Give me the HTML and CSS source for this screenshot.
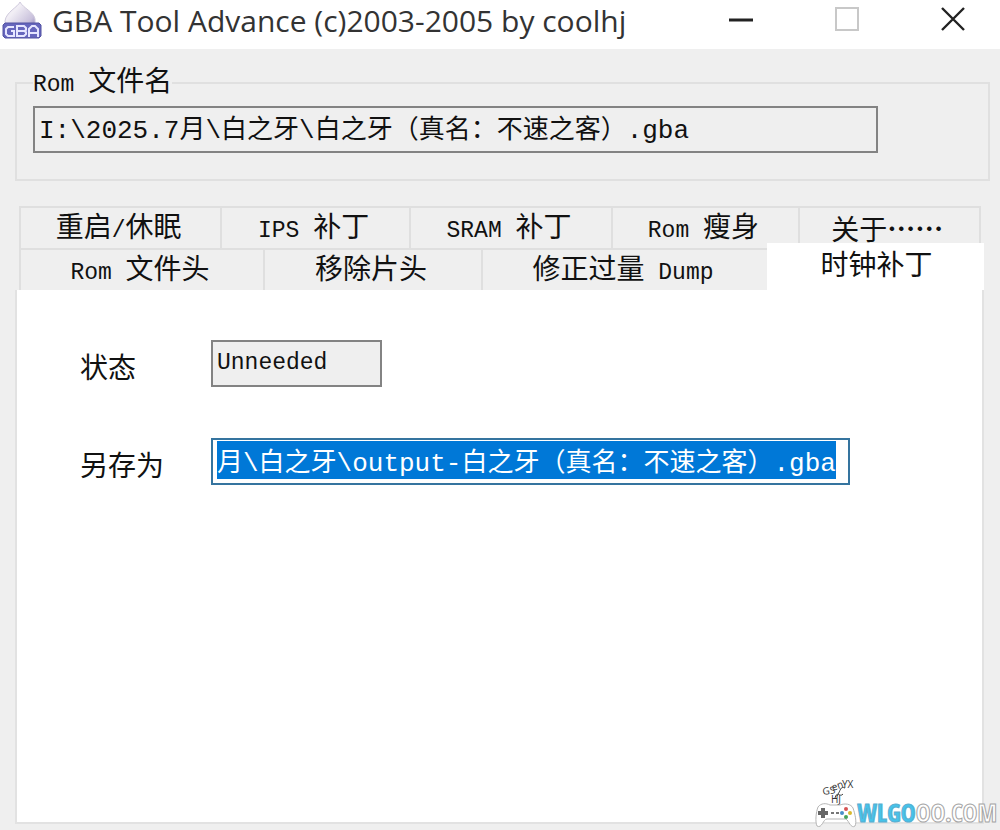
FILE: index.html
```html
<!DOCTYPE html>
<html lang="zh-CN">
<head>
    <meta charset="UTF-8">
    <title>GBA Tool Advance</title>
    <link rel="stylesheet" href="styles.css">
</head>
<body>
    <header class="titlebar">
        <svg class="app-icon" viewBox="0 0 40 38" aria-hidden="true">
            <defs>
                <linearGradient id="drop" x1="0" y1="0" x2="1" y2="1">
                    <stop offset="0.3" stop-color="#f1eef5"/>
                    <stop offset="0.7" stop-color="#c9c1dc"/>
                    <stop offset="1" stop-color="#6f63a8"/>
                </linearGradient>
            </defs>
            <path d="M18 0C16 5 4 10 3 19c0 9 7 13 16 13 10 0 15-6 14-15C32 10 21 6 18 0z" fill="url(#drop)" stroke="#d0cadd"/>
            <path d="M3 21h34l2 2v11l-2 2H3l-2-2V23z" fill="#6666bd" stroke="#5353a2"/>
            <path d="M12 25H6l-2 2v5l2 2h6v-5H9M15 24v10h7l2-2v-2l-2-1 2-1v-2l-2-2zm0 5h7M27 35v-8l3-3h3l3 3v8M27 31h9" fill="none" stroke="#e6e6ff" stroke-width="2"/>
        </svg>
        <h1 class="title">GBA Tool Advance (c)2003-2005 by coolhj</h1>
        <div class="window-buttons">
            <button type="button" class="window-button" aria-label="最小化">
                <svg viewBox="0 0 24 24"><path d="M0 13h24" stroke="#222" stroke-width="3"/></svg>
            </button>
            <button type="button" class="window-button" aria-label="最大化" disabled>
                <svg viewBox="0 0 24 24"><path d="M1 1h22v22H1z" fill="none" stroke="#c8c8c8" stroke-width="2"/></svg>
            </button>
            <button type="button" class="window-button" aria-label="关闭">
                <svg viewBox="0 0 24 24"><path d="M1 1l22 22M23 1L1 23" stroke="#222" stroke-width="2.4"/></svg>
            </button>
        </div>
    </header>

    <main class="content">
        <!-- Rom 文件名 -->
        <fieldset class="group">
            <legend><label for="romName"><span class="latin">Rom </span>文件名</label></legend>
            <input type="text" id="romName" class="field rom-name" value="I:\2025.7月\白之牙\白之牙（真名：不速之客）.gba" readonly>
        </fieldset>

        <!-- 选项卡 -->
        <div class="tabs" role="tablist">
            <div class="tab-row tab-row-back">
                <button type="button" class="tab" role="tab">重启<span class="latin">/</span>休眠</button>
                <button type="button" class="tab" role="tab"><span class="latin">IPS </span>补丁</button>
                <button type="button" class="tab" role="tab"><span class="latin">SRAM </span>补丁</button>
                <button type="button" class="tab" role="tab"><span class="latin">Rom </span>瘦身</button>
                <button type="button" class="tab" role="tab">关于<span class="dots">……</span></button>
            </div>
            <div class="tab-row tab-row-front">
                <button type="button" class="tab" role="tab"><span class="latin">Rom </span>文件头</button>
                <button type="button" class="tab" role="tab">移除片头</button>
                <button type="button" class="tab" role="tab">修正过量<span class="latin"> Dump</span></button>
                <button type="button" class="tab active" role="tab" aria-selected="true">时钟补丁</button>
            </div>
        </div>

        <section class="panel" role="tabpanel">
            <label for="status">状态</label>
            <input type="text" id="status" class="field status" value="Unneeded" readonly>
            <label for="saveAs">另存为</label>
            <input type="text" id="saveAs" class="field save-as" value="月\白之牙\output-白之牙（真名：不速之客）.gba">
        </section>
    </main>

    <div class="watermark">
        <svg class="gamepad" viewBox="0 0 42 50" aria-hidden="true">
            <g class="scribble">
                <text x="8" y="17" transform="rotate(-8 8 17)">GS</text>
                <text x="18" y="13" transform="rotate(-20 18 13)">en</text>
                <text x="27" y="10">YX</text>
                <text x="16" y="25">HJ</text>
                <path d="M20 20c2-8 5 0 8-4M22 18c4-6 3-10 8-8" fill="none" stroke="#444"/>
            </g>
            <path d="M3 29c3-4 8-4 12-2h10c5-2 11-1 13 3 2 6 4 14 2 18-4 3-6-5-9-7H12c-4 0-5 10-10 7C0 44 1 34 3 29z" fill="#fff" stroke="#b5b5b5"/>
            <path d="M8 30v10M3 35h10" stroke="#666" stroke-width="4"/>
            <path d="M16 35h3M21 35h3" stroke="#777" stroke-width="2"/>
            <circle cx="31" cy="31" r="2" fill="#d65454"/>
            <circle cx="27" cy="35" r="2" fill="#4a8fc9"/>
            <circle cx="35" cy="35" r="2" fill="#d9b92e"/>
            <circle cx="31" cy="39" r="2" fill="#46a35a"/>
        </svg>
        <span class="site"><span class="site-blue">WLGO</span>OO.COM</span>
    </div>

    <script>
        // 默认选中保存路径
        const saveAs = document.getElementById('saveAs');
        saveAs.focus();
        saveAs.select();
    </script>
</body>
</html>
```
FILE: styles.css
```css
* {
    box-sizing: border-box;
}
body {
    margin: 0;
    min-height: 100vh;
    display: flex;
    flex-direction: column;
    position: relative;
    background: #efefef;
    color: #111;
    font-family: "Liberation Mono", "Noto Sans CJK SC", monospace;
    font-size: 28px;
    line-height: 32px;
}
.titlebar {
    display: flex;
    align-items: center;
    height: 49px;
    padding: 0 35px 8px 2px;
    background: #fff;
}
.app-icon {
    width: 40px;
    height: 38px;
    margin-right: 10px;
}
.title {
    flex: 1;
    margin: 0;
    color: #333;
    font-family: "Open Sans", "Noto Sans", sans-serif;
    font-size: 30px;
    font-weight: normal;
    white-space: nowrap;
}
.window-buttons {
    display: flex;
    gap: 82px;
    padding-bottom: 3px;
}
.window-button {
    width: 24px;
    height: 24px;
    padding: 0;
    border: none;
    background: none;
}
.window-button svg {
    display: block;
}
.content {
    flex: 1;
    display: flex;
    flex-direction: column;
    padding: 15px 16px 6px 15px;
}
.group {
    margin: 0 -6px 0 0;
    padding: 5px 110px 26px 16px;
    border: 2px solid #e0e0e0;
}
legend {
    padding: 4px 0 0;
}
.latin {
    font-size: 23px;
    white-space: pre;
}
.dots {
    font-family: "Noto Sans CJK SC", sans-serif;
    font-weight: bold;
}
.field {
    height: 47px;
    padding: 0 4px 6px;
    border: 2px solid #838383;
    border-radius: 0;
    background: #efefef;
    color: #111;
    font-family: inherit;
    font-size: 26px;
    line-height: 30px;
    outline: none;
}
.rom-name {
    display: block;
    width: 100%;
}
.tabs {
    margin: 25px 0 0 4px;
}
.tab-row {
    display: grid;
}
.tab-row-back {
    grid-template-columns: 201fr 188fr 202fr 186fr 183fr;
    margin-right: 3px;
}
.tab-row-front {
    grid-template-columns: 244fr 218fr 286fr 217fr;
}
.tab {
    height: 42px;
    padding: 4px 4px 0 0;
    border: 2px solid #dfdfdf;
    border-width: 2px 0 0 2px;
    background: #efefef;
    color: inherit;
    font: inherit;
    white-space: nowrap;
}
.tab-row-back .tab:last-child {
    border-right-width: 2px;
}
.tab.active {
    height: 47px;
    margin-top: -5px;
    padding: 0;
    border-color: #fff;
    background: #fff;
}
.panel {
    flex: 1;
    display: grid;
    grid-template-columns: 131px 1fr;
    align-content: start;
    align-items: end;
    row-gap: 51px;
    padding: 50px 132px 48px 63px;
    border: 2px solid #e2e2e2;
    border-top: none;
    background: #fff;
}
.status {
    width: 171px;
    padding-bottom: 2px;
    font-size: 23px;
}
.save-as {
    width: 100%;
    padding: 0 4px 4px;
    border-color: #35749f;
    background: #fff;
}
.save-as::selection {
    background: #0078d7;
    color: #fff;
}
.watermark {
    position: absolute;
    right: 3px;
    bottom: 2px;
    display: flex;
    align-items: flex-end;
}
.gamepad {
    width: 42px;
    height: 50px;
}
.scribble {
    fill: #333;
    font-family: "Open Sans", sans-serif;
    font-size: 10px;
}
.site {
    color: #fff;
    font-family: "Liberation Sans Narrow", "Open Sans Condensed", "Roboto Condensed", "Liberation Sans", sans-serif;
    font-size: 25px;
    font-weight: bold;
    -webkit-text-stroke: 1px #a5a5a5;
}
.site-blue {
    color: #45c3ea;
    -webkit-text-stroke-color: #5aaed0;
}
```
